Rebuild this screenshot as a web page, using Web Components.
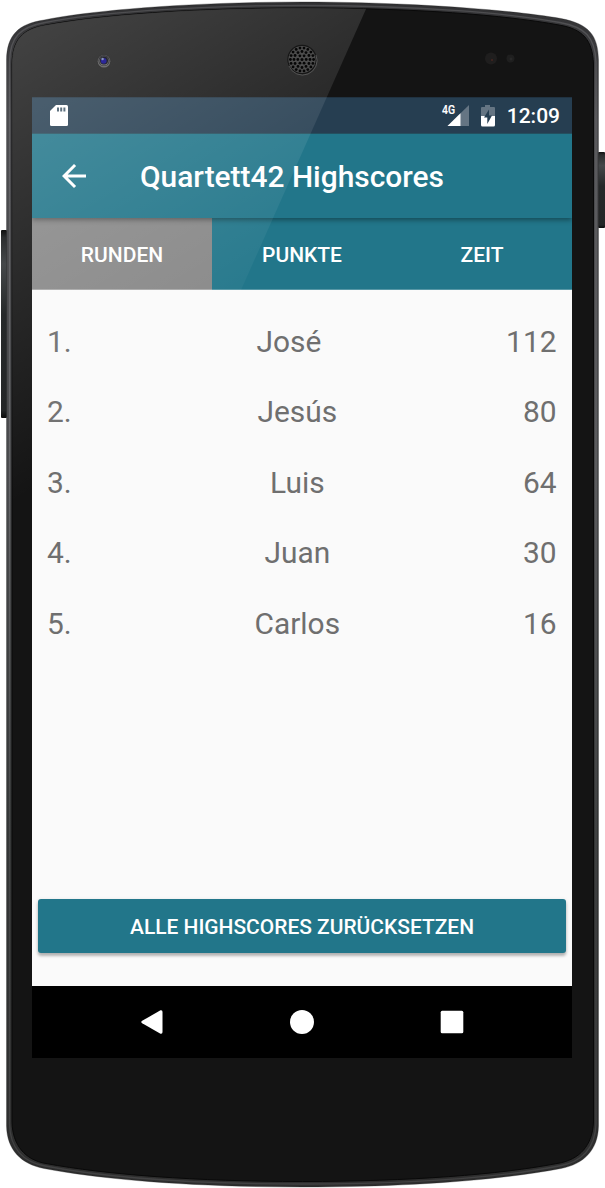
<!DOCTYPE html>
<html lang="de">
<head>
<meta charset="utf-8">
<title>Quartett42 Highscores</title>
<style>
html,body{margin:0;padding:0;background:#fff}
body{font-family:Roboto,"Liberation Sans",sans-serif;width:605px;height:1188px;overflow:hidden}
</style>
</head>
<body>
<phone-frame>
  <status-bar time="12:09"></status-bar>
  <app-bar>Quartett42 Highscores</app-bar>
  <tab-strip>
    <tab-item active>RUNDEN</tab-item>
    <tab-item>PUNKTE</tab-item>
    <tab-item>ZEIT</tab-item>
  </tab-strip>
  <score-list>
    <score-row rank="1." points="112">José</score-row>
    <score-row rank="2." points="80">Jesús</score-row>
    <score-row rank="3." points="64">Luis</score-row>
    <score-row rank="4." points="30">Juan</score-row>
    <score-row rank="5." points="16">Carlos</score-row>
    <reset-button slot="action">ALLE HIGHSCORES ZURÜCKSETZEN</reset-button>
  </score-list>
  <nav-bar></nav-bar>
</phone-frame>
<script>
function define(name, html, setup) {
  const tpl = document.createElement('template');
  tpl.innerHTML = html;
  customElements.define(name, class extends HTMLElement {
    connectedCallback() {
      if (this.shadowRoot) return;
      const root = this.attachShadow({mode: 'open'});
      root.append(tpl.content.cloneNode(true));
      if (setup) setup(this, root);
    }
  });
}

const body = 'M6.500 60 C7 35 18 24 44 20 C90 10.500 190 2 302.500 2 C415 2 515 10.500 561 18.500 C589 24 598 35 598.500 60 V1126 C598 1150 584 1164 561 1168.500 C500 1180 410 1187 302.500 1187 C195 1187 105 1180 44 1168.500 C21 1164 7 1150 6.500 1126 Z';
const face = 'M12 64 C12.500 40 22 29 46 25 C100 15 190 8 302.500 8 C415 8 505 15 559 25 C583 29 592.500 40 593.500 64 V1122 C592.500 1145 580 1160 557 1163.500 C500 1174.500 410 1181.500 302.500 1181.500 C195 1181.500 105 1174.500 46 1163.500 C25 1160 12.500 1145 12 1122 Z';

/* speaker holes: concentric rings round a centre hole */
let holes = '<circle cx="302" cy="59.500" r="1.500"/>';
[[4.200, 6], [8, 12], [11.600, 18]].forEach(([r, n]) => {
  for (let i = 0; i < n; i++) {
    const a = i * 2 * Math.PI / n;
    holes += `<circle cx="${(302 + r * Math.cos(a)).toFixed(2)}" cy="${(59.5 + r * Math.sin(a)).toFixed(2)}" r="1.400"/>`;
  }
});

define('phone-frame', `
<style>
:host{display:block;position:relative;box-sizing:border-box;width:605px;height:1188px;padding:97px 33px 130px 32px}
svg{position:absolute;left:0;top:0;pointer-events:none}
.glare{z-index:2}
.screen{position:relative;z-index:1;display:flex;flex-direction:column;height:960px;border-top:1px solid #203241}
</style>
<svg width="605" height="1188" viewBox="0 0 605 1188">
  <defs>
    <linearGradient id="rim" x1="0" y1="0" x2="0" y2="1"><stop offset="0" stop-color="#303032"/><stop offset=".1" stop-color="#4b4b4e"/><stop offset=".4" stop-color="#48494b"/><stop offset=".7" stop-color="#333535"/><stop offset="1" stop-color="#2d2d2d"/></linearGradient>
    <linearGradient id="key" x1="0" y1="0" x2="0" y2="1"><stop offset="0" stop-color="#101010"/><stop offset=".04" stop-color="#2c2e2f"/><stop offset=".18" stop-color="#45484a"/><stop offset=".45" stop-color="#26292a"/><stop offset=".96" stop-color="#242627"/><stop offset="1" stop-color="#0a0a0a"/></linearGradient>
    <linearGradient id="shine" x1="0" y1="0" x2="0" y2="1"><stop offset="0" stop-color="#929296" stop-opacity=".28"/><stop offset=".4" stop-color="#929296" stop-opacity=".4"/><stop offset=".75" stop-color="#929296" stop-opacity=".18"/><stop offset="1" stop-color="#929296" stop-opacity=".2"/></linearGradient>
  </defs>
  <rect x="1" y="230" width="6" height="188" rx="1" fill="url(#key)"/>
  <rect x="598" y="152" width="7" height="76" rx="1" fill="url(#key)"/>
  <path d="${body}" fill="url(#rim)"/>
  <path d="${body}" fill="none" stroke="#1d1d1e" stroke-opacity=".3"/>
  <path d="M9.500 62 C10 37 20 27 45 22.500 C95 13 190 5.500 302.500 5.500 C415 5.500 510 13 560 22.500 C585 27 595 37 596 62 V1124 C595 1148 582 1162 559 1166 C500 1177.500 410 1184 302.500 1184 C195 1184 105 1177.500 45 1166 C23 1162 10 1148 9.500 1124 Z" fill="none" stroke="url(#shine)" stroke-width="1.300"/>
  <path d="${face}" fill="#141414" stroke="#090909" stroke-width="1"/>
</svg>
<div class="screen"><slot></slot></div>
<svg class="glare" width="605" height="1188" viewBox="0 0 605 1188">
  <defs>
    <linearGradient id="gl" gradientUnits="userSpaceOnUse" x1="0" y1="0" x2="223" y2="381"><stop offset="0" stop-color="#fff" stop-opacity=".215"/><stop offset="1" stop-color="#fff" stop-opacity="0"/></linearGradient>
    <clipPath id="cf"><path d="${face}"/></clipPath>
  </defs>
  <path d="M0 0 H370 L0 832 Z" fill="url(#gl)" clip-path="url(#cf)"/>
  <circle cx="104" cy="61" r="7.200" fill="#3a3a3a"/>
  <circle cx="104" cy="61.300" r="6.300" fill="#707070"/><circle cx="104" cy="60.500" r="5.600" fill="#3c3c40"/><circle cx="104" cy="61" r="4.600" fill="#777"/><circle cx="104" cy="60.600" r="4" fill="#26262e"/><circle cx="103.700" cy="60.800" r="2.900" fill="#2c2899"/><circle cx="102.600" cy="59" r="1.200" fill="#8a95b8"/>
  <circle cx="302" cy="59.500" r="14.700" fill="#161616"/>
  <path d="M289 66 A14.500 14.500 0 0 0 316 55" fill="none" stroke="#606060" stroke-width=".8"/>
  <circle cx="302" cy="59.500" r="13.600" fill="#4c4c4c"/><g fill="#060606">${holes}</g>
  <circle cx="491" cy="58.500" r="6" fill="#1f1e1e"/><circle cx="492" cy="60" r="1.100" fill="#432520"/>
  <circle cx="510.500" cy="58.500" r="4" fill="#1f1f1f"/><circle cx="511" cy="59" r="1.500" fill="#282828"/>
</svg>`);

define('status-bar', `
<style>
:host{display:flex;flex:none;height:36px;box-sizing:border-box;background:#263e51;color:#fff;border-bottom:1px solid #24505f;padding:0 12px 0 18px;align-items:flex-start}
svg{display:block;margin-top:5px}
.sp{flex:1}
span{font-size:21px;font-weight:500;line-height:37px;margin-left:11px}
</style>
<svg width="18" height="24"><path d="M6 2 H16.500 Q18 2 18 3.500 V21.500 Q18 23 16.500 23 H1.500 Q0 23 0 21.500 V8 Z" fill="#fff"/><path d="M7 4.500 h2 v4 h-2z M10.200 4.500 h2 v4 h-2z M13.400 4.500 h2 v4 h-2z" fill="#425969"/></svg>
<div class="sp"></div>
<svg width="28" height="24"><path d="M28 2 V23 H6.500 Z" fill="#657583"/><path d="M19.500 10.200 V23 H6.500 Z" fill="#fff"/><text x="1" y="11.300" font-size="13" font-weight="500" fill="#fff" stroke="#fff" stroke-width=".2" textLength="13" lengthAdjust="spacingAndGlyphs">4G</text></svg>
<svg width="16" height="25" style="margin-left:11px"><path d="M5 2 H10 V4 H14 Q15 4 15 5 V13.500 H1 V5 Q1 4 2 4 H5 Z" fill="#657583"/><path d="M1 13 H15 V22 Q15 23.500 13.500 23.500 H2.500 Q1 23.500 1 22 Z" fill="#fff"/><path d="M9 6.500 L4 14.500 H7.300 V21 L12 12.500 H9 Z" fill="#263e51"/></svg>
<span></span>`, (el, r) => { r.querySelector('span').textContent = el.getAttribute('time'); });

define('app-bar', `
<style>
:host{display:flex;flex:none;height:84px;box-sizing:border-box;align-items:center;background:#22768a;color:#fff;padding-left:30px;position:relative;z-index:1;box-shadow:0 2px 5px rgba(0,0,0,.38);clip-path:inset(0 0 -8px 0)}
h1{font-size:29.900px;font-weight:500;line-height:36px;margin:2px 0 0 54px}
</style>
<svg width="24" height="24" viewBox="0 0 24 24"><path d="M24 10.500 H5.700 L14.100 2.100 L12 0 L0 12 L12 24 L14.100 21.900 L5.700 13.500 H24 Z" fill="#fff"/></svg>
<h1><slot></slot></h1>`);

define('tab-strip', `
<style>:host{display:grid;grid-template-columns:repeat(3,1fr);flex:none;height:72px;background:#22768a}</style><slot></slot>`);

define('tab-item', `
<style>
:host{display:flex;align-items:center;justify-content:center;color:#fff;font-size:21px;font-weight:500;box-sizing:border-box;padding-top:2px;border-bottom:1px solid #5797a6}
:host([active]){background:#888;border-bottom-color:#a8a8a8}
</style><slot></slot>`);

define('score-list', `
<style>
:host{display:flex;flex-direction:column;flex:1;background:#fafafa;padding:16.500px 6px 33px;min-height:0;box-sizing:border-box}
.rows{display:flex;flex-direction:column;flex:1;padding:0 9.500px 0 9px}
</style><div class="rows"><slot></slot></div><slot name="action"></slot>`);

define('score-row', `
<style>
:host{display:flex;align-items:center;height:70.500px;font-size:29.900px;line-height:36px;color:#6f6f6f}
.name{flex:1;text-align:center}
</style><span class="rank"></span><span class="name"><slot></slot></span><span class="points"></span>`, (el, r) => {
  r.querySelector('.rank').textContent = el.getAttribute('rank');
  r.querySelector('.points').textContent = el.getAttribute('points');
});

define('reset-button', `
<style>
:host{display:block}
button{display:block;width:100%;height:54px;box-sizing:border-box;border:0;border-radius:3px;background:#22768a;color:#fff;font:500 20.950px/52px Roboto,"Liberation Sans",sans-serif;padding:2px 0 0;box-shadow:0 3px 3px rgba(0,0,0,.24),0 1px 4px rgba(0,0,0,.12)}
</style><button><slot></slot></button>`);

define('nav-bar', `
<style>
:host{display:flex;flex:none;height:72px;background:#000;justify-content:center;align-items:center;gap:126px}
svg{display:block}
</style>
<svg width="24" height="24"><path d="M2.200 10.800 L20.500 .3 Q22.500 -.2 22.500 2 V22 Q22.500 24.200 20.500 23.700 L2.200 13.300 Q.4 12 2.200 10.800Z" fill="#fff"/></svg>
<svg width="24" height="24"><circle cx="12" cy="12" r="12" fill="#fff"/></svg>
<svg width="24" height="24"><rect x=".7" y=".7" width="22.600" height="22.600" rx="1.500" fill="#fff"/></svg>`);
</script>
</body>
</html>
